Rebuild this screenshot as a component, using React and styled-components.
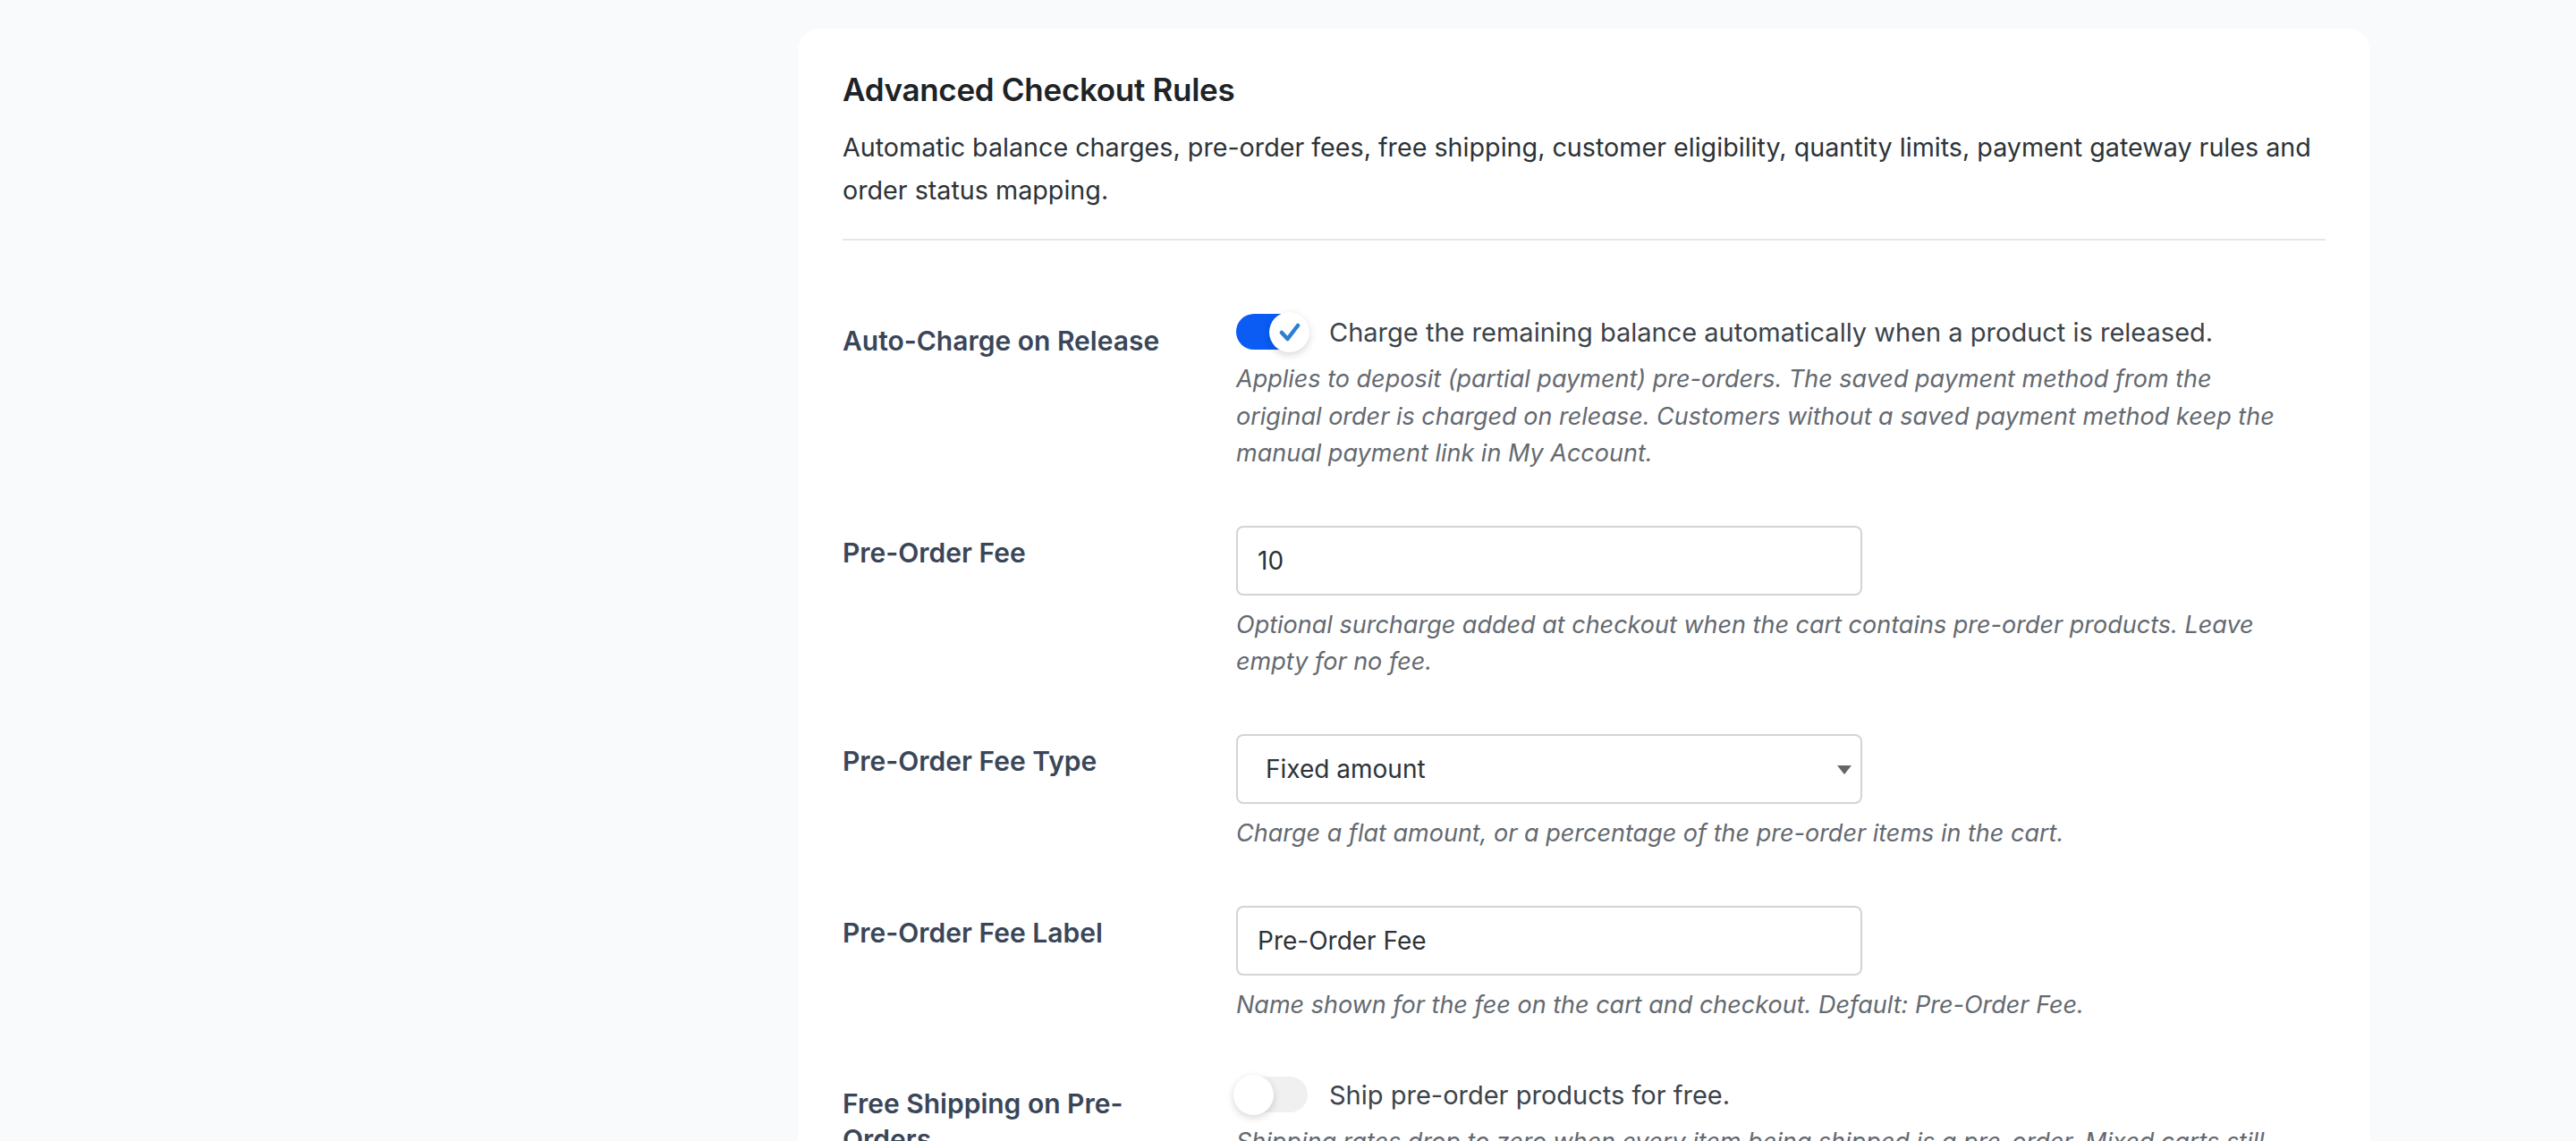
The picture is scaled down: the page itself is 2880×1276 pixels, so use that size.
import React from 'react';
import styled, { createGlobalStyle } from 'styled-components';

const GlobalStyle = createGlobalStyle`
    * { box-sizing: border-box; }
    body {
        margin: 0;
        background: #f9fafb;
        font-family: Inter, "Noto Sans", "Liberation Sans", sans-serif;
        color: #2c3338;
    }
`;

const Page = styled.div`
    min-height: 1276px;
    padding: 32px 230px 0 892px;
`;

const Card = styled.section`
    background: #fff;
    border-radius: 24px;
    padding: 44px 50px 40px;
    box-shadow: 0 1px 2px rgba(16, 24, 40, 0.03);
`;

const Title = styled.h2`
    margin: 0;
    font-size: 35px;
    line-height: 48px;
    font-weight: 600;
    color: #1d2327;
    letter-spacing: -0.3px;
`;

const Intro = styled.p`
    margin: 17px 0 0;
    font-size: 28.7px;
    line-height: 48px;
    color: #2c3338;
`;

const Divider = styled.hr`
    margin: 30px 0 0;
    border: 0;
    height: 2px;
    background: #e6e7e9;
`;

const FormTable = styled.div`
    margin-top: 52px;
`;

const Row = styled.div`
    display: grid;
    grid-template-columns: 420px 1fr;
`;

const Label = styled.div`
    padding: 40px 20px 40px 0;
    font-size: 30px;
    line-height: 40px;
    font-weight: 600;
    color: #3a4658;
`;

const Field = styled.div`
    padding: 30px 20px;
`;

const ToggleLine = styled.label`
    display: flex;
    align-items: center;
    gap: 24px;
    height: 40px;
    font-size: 29px;
    color: #3c434a;
`;

const Track = styled.span`
    position: relative;
    flex: none;
    width: 80px;
    height: 40px;
    border-radius: 20px;
    background: ${(p) => (p.$on ? '#0a5cf5' : '#f0f0f1')};
`;

const Knob = styled.span`
    position: absolute;
    top: -2px;
    left: ${(p) => (p.$on ? '37px' : '-3px')};
    width: 45px;
    height: 45px;
    border-radius: 50%;
    background: #fff;
    box-shadow: 0 3px 9px rgba(0, 0, 0, 0.16);
    display: flex;
    align-items: center;
    justify-content: center;
`;

const Help = styled.p`
    margin: 12px 0 0;
    max-width: 1180px;
    font-size: 27px;
    line-height: 41.6px;
    font-style: italic;
    color: #646970;
`;

const TextInput = styled.input`
    display: block;
    width: 700px;
    height: 78px;
    padding: 0 22px;
    border: 2px solid #d3d4d6;
    border-radius: 8px;
    background: #fff;
    font-family: inherit;
    font-size: 28px;
    color: #2c3338;
    outline: none;
`;

const SelectWrap = styled.div`
    position: relative;
    width: 700px;

    &::after {
        content: '';
        position: absolute;
        right: 12px;
        top: 35px;
        border-left: 8px solid transparent;
        border-right: 8px solid transparent;
        border-top: 10px solid #666;
    }
`;

const Select = styled.select`
    display: block;
    width: 100%;
    height: 78px;
    padding: 0 40px 0 31px;
    border: 2px solid #d3d4d6;
    border-radius: 8px;
    background: #fff;
    appearance: none;
    font-family: inherit;
    font-size: 28px;
    color: #2c3338;
    outline: none;
`;

const Toggle = ({ on, children }) => (
    <ToggleLine>
        <Track $on={on}>
            <Knob $on={on}>
                {on && (
                    <svg width="24" height="22" viewBox="0 0 24 22">
                        <path d="M3 11 L9.5 18 L21 3" fill="none" stroke="#2f7fd1" strokeWidth="4.5" strokeLinecap="round" strokeLinejoin="round" />
                    </svg>
                )}
            </Knob>
        </Track>
        {children}
    </ToggleLine>
);

export default function App() {
    return (
        <>
            <GlobalStyle />
            <Page>
                <Card>
                    <Title>Advanced Checkout Rules</Title>
                    <Intro>
                        Automatic balance charges, pre-order fees, free shipping, customer eligibility, quantity limits, payment gateway rules and order status mapping.
                    </Intro>
                    <Divider />
                    <FormTable>
                        <Row>
                            <Label>Auto-Charge on Release</Label>
                            <Field>
                                <Toggle on>Charge the remaining balance automatically when a product is released.</Toggle>
                                <Help>
                                    Applies to deposit (partial payment) pre-orders. The saved payment method from the original order is charged on release. Customers without a saved payment method keep the manual payment link in My Account.
                                </Help>
                            </Field>
                        </Row>
                        <Row>
                            <Label>Pre-Order Fee</Label>
                            <Field>
                                <TextInput type="text" defaultValue="10" />
                                <Help>
                                    Optional surcharge added at checkout when the cart contains pre-order products. Leave empty for no fee.
                                </Help>
                            </Field>
                        </Row>
                        <Row>
                            <Label>Pre-Order Fee Type</Label>
                            <Field>
                                <SelectWrap>
                                    <Select defaultValue="fixed">
                                        <option value="fixed">Fixed amount</option>
                                        <option value="percent">Percentage</option>
                                    </Select>
                                </SelectWrap>
                                <Help>Charge a flat amount, or a percentage of the pre-order items in the cart.</Help>
                            </Field>
                        </Row>
                        <Row>
                            <Label>Pre-Order Fee Label</Label>
                            <Field>
                                <TextInput type="text" defaultValue="Pre-Order Fee" />
                                <Help>Name shown for the fee on the cart and checkout. Default: Pre-Order Fee.</Help>
                            </Field>
                        </Row>
                        <Row>
                            <Label>Free Shipping on Pre-Orders</Label>
                            <Field>
                                <Toggle>Ship pre-order products for free.</Toggle>
                                <Help>
                                    Shipping rates drop to zero when every item being shipped is a pre-order. Mixed carts still pay the regular shipping rate.
                                </Help>
                            </Field>
                        </Row>
                    </FormTable>
                </Card>
            </Page>
        </>
    );
}
